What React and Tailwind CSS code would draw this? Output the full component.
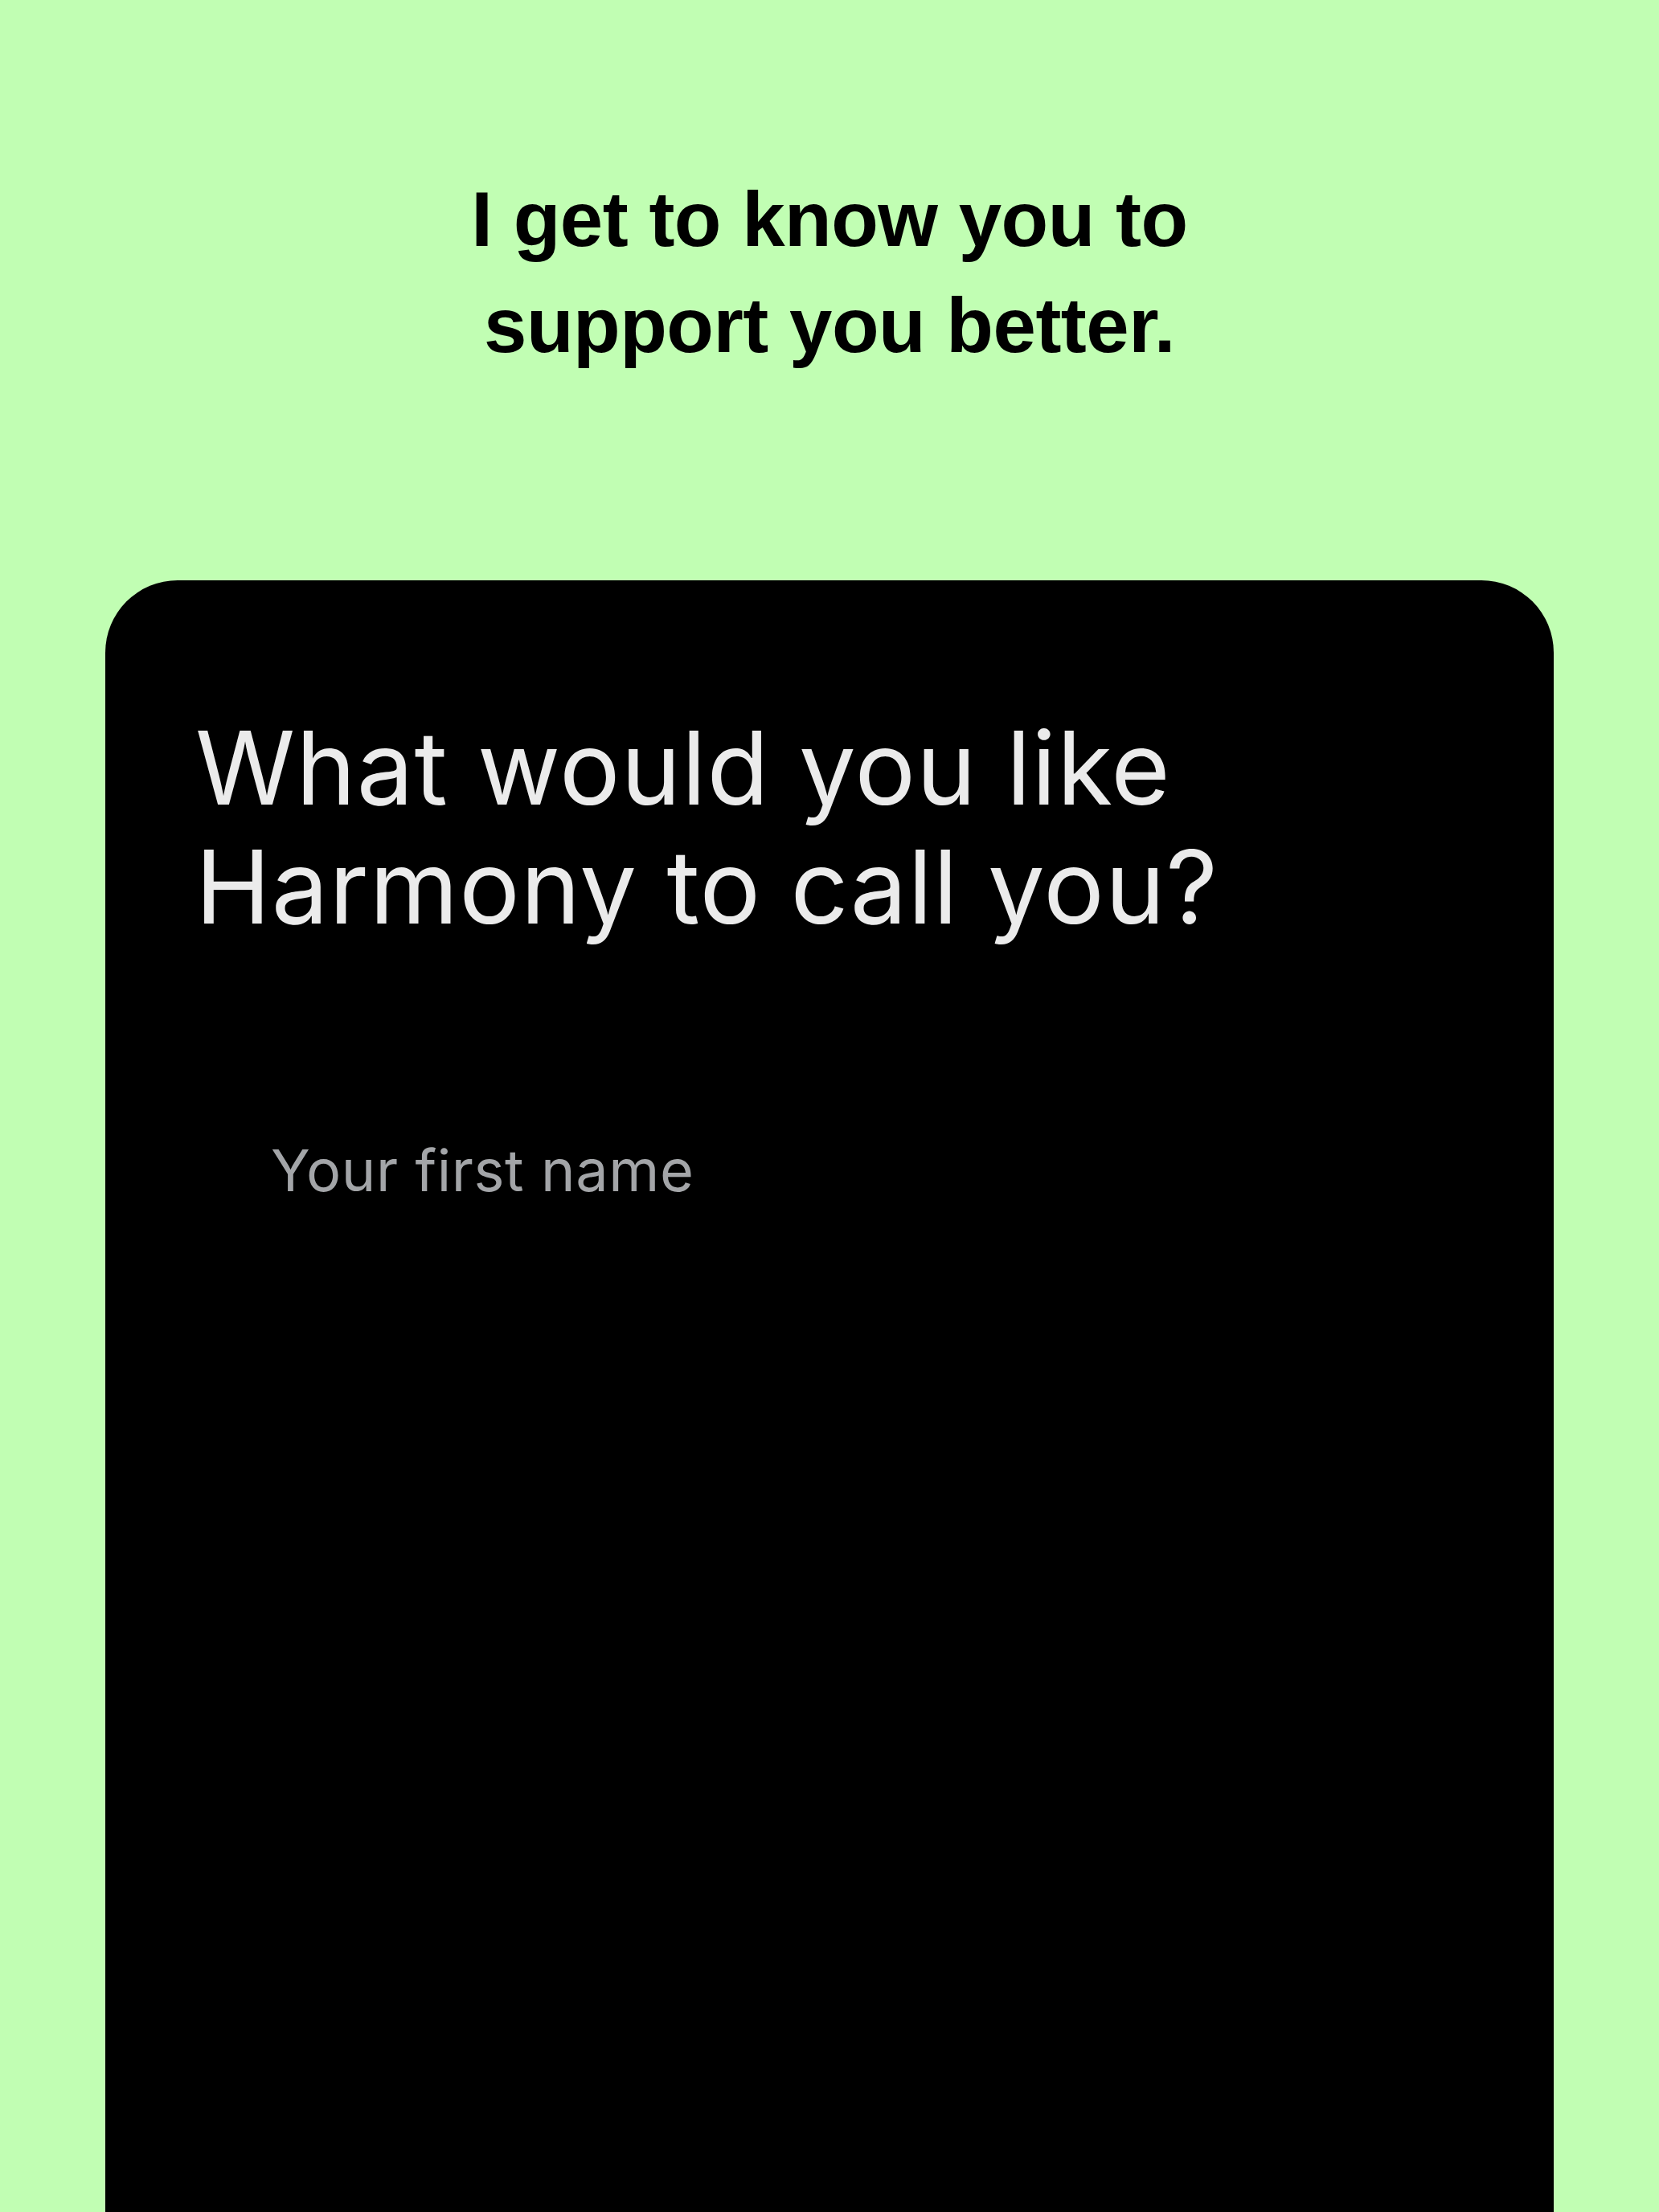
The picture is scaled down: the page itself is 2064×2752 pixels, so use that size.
import React from 'react';

// ── Onboarding: name step ──────────────────────────────────────────────────────
export default function App() {
  return (
    <div className="min-h-[2752px] flex flex-col bg-[#c1feb3]">
      <header className="pt-[207px] pb-[251px] flex justify-center">
        <h1
          className="text-center text-black font-bold text-[96px] leading-[132px] tracking-[-0.5px]"
          style={{ fontFamily: '"Liberation Sans", Arial, sans-serif' }}
        >
          I get to know you to
          <br />
          support you better.
        </h1>
      </header>

      <main
        className="flex-1 mx-[131px] rounded-t-[90px] bg-black pt-[159px] pl-[112px] pr-[112px]"
        style={{ fontFamily: 'Inter, "Noto Sans", sans-serif' }}
      >
        <h2 className="text-[#ebebeb] font-normal text-[126px] leading-[148px] tracking-[1px]">
          What would you like
          <br />
          Harmony to call you?
        </h2>

        <div className="mt-[236px] pl-[94px]">
          <input
            type="text"
            placeholder="Your first name"
            className="w-full bg-transparent outline-none border-0 p-0 text-[72px] leading-[1.2] tracking-[0.6px] text-[#ebebeb] placeholder:text-[#a3a5a8]"
            style={{ fontFamily: 'Inter, "Noto Sans", sans-serif' }}
          />
        </div>
      </main>
    </div>
  );
}
